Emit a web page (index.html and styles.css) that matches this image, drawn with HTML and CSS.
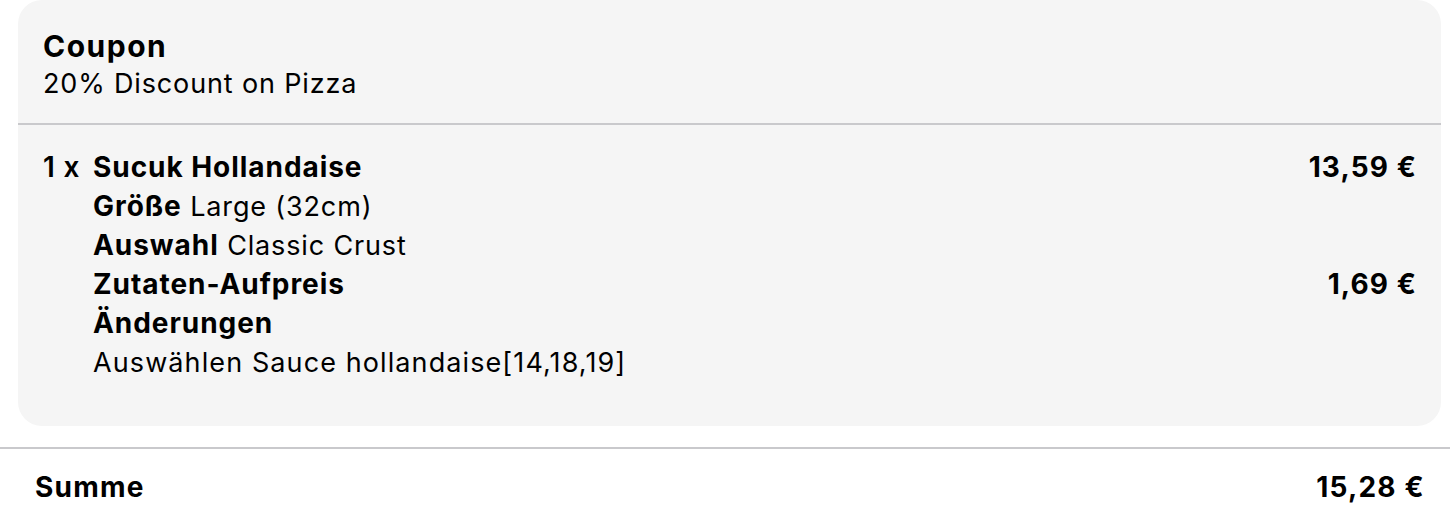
FILE: index.html
```html
<!DOCTYPE html>
<html lang="de">
<head>
<meta charset="utf-8">
<title>Warenkorb</title>
<link rel="stylesheet" href="styles.css">
</head>
<body>
<div class="card">
  <div class="coupon">
    <div class="coupon-title">Coupon</div>
    <div class="coupon-text">20% Discount on Pizza</div>
  </div>
  <div class="item">
    <div class="row">
      <span class="qty">1 x</span>
      <span class="name main">Sucuk Hollandaise</span>
      <span class="price">13,59 €</span>
    </div>
    <div class="row">
      <span class="qty"></span>
      <span class="name"><b>Größe</b> Large (32cm)</span>
    </div>
    <div class="row">
      <span class="qty"></span>
      <span class="name"><b>Auswahl</b> Classic Crust</span>
    </div>
    <div class="row">
      <span class="qty"></span>
      <span class="name"><b>Zutaten-Aufpreis</b></span>
      <span class="price">1,69 €</span>
    </div>
    <div class="row">
      <span class="qty"></span>
      <span class="name"><b>Änderungen</b></span>
    </div>
    <div class="row">
      <span class="qty"></span>
      <span class="name modifiers">Auswählen Sauce hollandaise[14,18,19]</span>
    </div>
  </div>
</div>
<div class="total">
  <span class="total-label">Summe</span>
  <span class="total-price">15,28 €</span>
</div>
</body>
</html>
```

FILE: styles.css
```css
html, body {
  margin: 0;
  padding: 0;
  background: #ffffff;
}
body {
  font-family: Inter, "Noto Sans", "Liberation Sans", sans-serif;
  color: #000;
  font-size: 27px;
  letter-spacing: 0.85px;
}
.card {
  margin-left: 18px;
  width: 1423px;
  background: #f5f5f5;
  border-radius: 24px;
}
.coupon {
  padding: 28px 25px 21px 25px;
  border-bottom: 2px solid #c9c9cc;
}
.coupon-title {
  font-weight: 700;
  font-size: 30px;
  letter-spacing: 1.5px;
  line-height: 37px;
}
.coupon-text {
  font-size: 27px;
  line-height: 37px;
}
.item {
  padding: 23px 25px 44px 25px;
}
.row {
  display: flex;
  line-height: 39px;
}
.qty {
  width: 50px;
  flex: none;
  font-weight: 600;
  font-size: 28px;
}
.name {
  flex: 1;
  font-weight: 400;
}
.name.main,
.name b {
  font-weight: 700;
  font-size: 28px;
  letter-spacing: 0.95px;
}
.name.modifiers {
  letter-spacing: 1.1px;
}
.price {
  font-weight: 700;
  font-size: 28px;
  letter-spacing: 1.1px;
  text-align: right;
  margin-right: -1px;
}
.total {
  margin-top: 21px;
  border-top: 2px solid #c9c9cc;
  display: flex;
  justify-content: space-between;
  padding: 19px 25px 0 35px;
  line-height: 39px;
  font-weight: 700;
  font-size: 28px;
  letter-spacing: 1.2px;
}
```
